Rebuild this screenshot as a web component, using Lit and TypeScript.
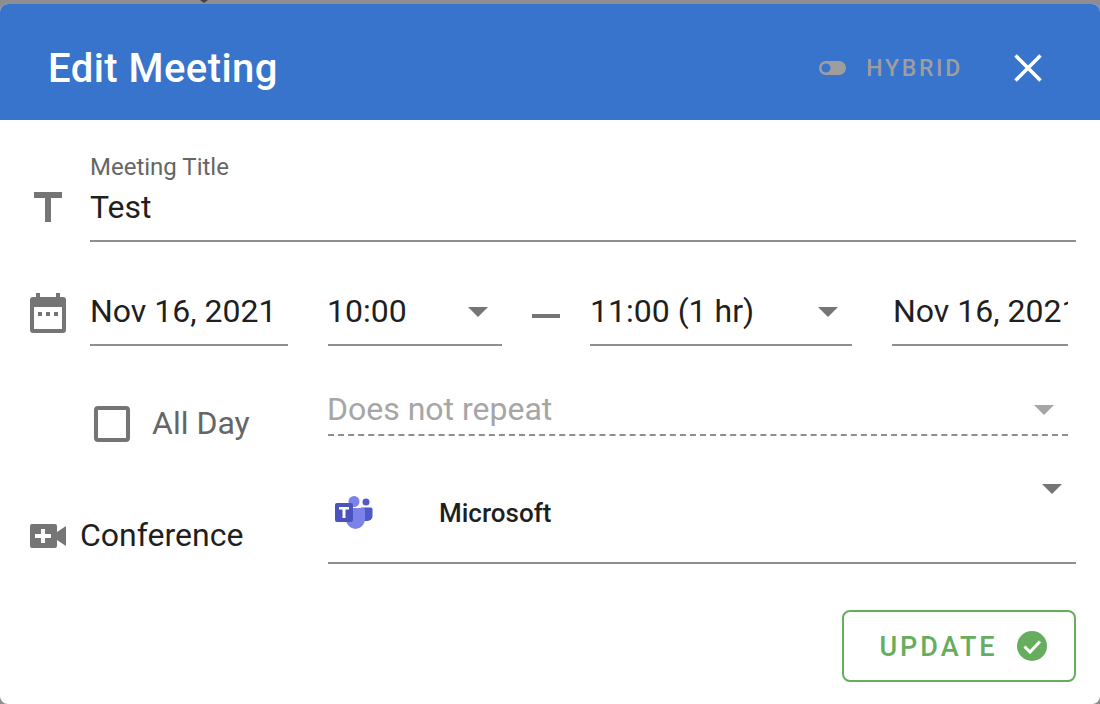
import { LitElement, html, css, svg } from "lit";
import { customElement } from "lit/decorators.js";

const caret = svg`<svg class="caret" width="20" height="10" viewBox="0 0 20 10"><path d="M0 0h20L10 10z" fill="currentColor"/></svg>`;

@customElement("app-root")
export class AppRoot extends LitElement {
  static styles = css`
    :host { display: block; position: relative; width: 1100px; height: 704px; background: #8e8e8e; overflow: hidden; font-family: Roboto, sans-serif; color: #1f1f1f; padding-top: 4px; box-sizing: border-box; }
    .notch { position: absolute; left: 200px; top: 0; width: 8px; height: 3px; display: block; }
    .dialog { height: 700px; background: #fff; border-radius: 8px; overflow: hidden; }
    .head { height: 116px; background: #3874cb; display: flex; align-items: center; padding: 12px 57px 0 48px; box-sizing: border-box; color: #fff; }
    .head h1 { margin: 2px auto 0 0; font-size: 40px; font-weight: 500; letter-spacing: 0.45px; line-height: 1; }
    .hybrid { display: flex; align-items: center; gap: 20px; color: #9e9e9e; font-size: 23px; font-weight: 500; letter-spacing: 2.7px; margin-right: 50px; }
    .close { display: block; }
    .body { padding: 0 24px 0 30px; }
    .title-row { display: flex; margin-top: 32px; height: 90px; }
    .icon { width: 36px; flex: none; display: block; }
    .t-ic { margin-top: 40px; }
    .field { margin-left: 24px; flex: 1; border-bottom: 2px solid #8e8e8e; height: 90px; box-sizing: border-box; }
    .label { font-size: 24px; line-height: 30px; color: #666; }
    .value { font-size: 32px; line-height: 40px; margin-top: 5px; }
    .date-row { display: flex; align-items: flex-start; margin-top: 50px; height: 54px; }
    .cal { margin-top: 1px; }
    .inp { height: 54px; box-sizing: border-box; border-bottom: 2px solid #8e8e8e; font-size: 32px; line-height: 38px; white-space: nowrap; overflow: hidden; display: flex; justify-content: space-between; color: #1f1f1f; }
    .inp span, .repeat span { margin-left: -1px; }
    .caret { color: #757575; flex: none; margin-top: 15px; margin-right: 14px; }
    .d1 { width: 198px; margin-left: 24px; }
    .t1 { width: 174px; margin-left: 40px; }
    .dash { width: 28px; height: 4px; margin: 22px 30px 0; background: #757575; flex: none; }
    .t2 { width: 262px; }
    .t2 span { margin-left: 0; }
    .d2 { width: 176px; margin-left: 40px; padding-left: 1px; }
    .repeat-row { display: flex; margin-top: 38px; height: 52px; }
    .check { width: 36px; height: 36px; margin: 22px 0 0 64px; box-sizing: border-box; border: 4px solid #757575; border-radius: 4px; flex: none; }
    .allday { width: 176px; margin-left: 22px; font-size: 32px; line-height: 38px; padding-top: 20px; color: #666; flex: none; }
    .repeat { flex: none; width: 740px; height: 52px; box-sizing: border-box; border-bottom: 2px dashed #8e8e8e; display: flex; justify-content: space-between; font-size: 32px; line-height: 38px; color: #a6a6a6; padding-top: 6px; }
    .repeat .caret { color: #a6a6a6; margin-right: 14px; margin-top: 15px; }
    .conf-row { display: flex; height: 128px; }
    .conf-label { width: 298px; display: flex; align-items: center; gap: 14px; font-size: 32px; margin-top: 79px; height: 40px; flex: none; }
    .video { flex: none; margin-top: 2px; }
    .conf { flex: 1; height: 128px; border-bottom: 2px solid #8e8e8e; box-sizing: border-box; display: flex; align-items: flex-start; }
    .teams { margin: 58px 0 0 6px; flex: none; }
    .ms { font-size: 26px; font-weight: 500; margin: 61px 0 0 66px; line-height: 32px; flex: 1; }
    .conf .caret { margin: 48px 14px 0 0; }
    .foot { display: flex; justify-content: flex-end; margin-top: 46px; }
    .update { width: 234px; height: 72px; box-sizing: border-box; border: 2px solid #66ad5e; border-radius: 8px; background: #fff; color: #66ad5e; font: 500 27px Roboto, sans-serif; letter-spacing: 3px; display: flex; align-items: center; justify-content: center; gap: 19px; padding: 2px 0 0 8px; }
    .update svg { margin-top: -2px; }
  `;

  render() {
    return html`
      <svg class="notch" viewBox="0 0 8 3"><path d="M0 0h8L4 3z" fill="#444"/></svg>
      <div class="dialog">
        <header class="head">
          <h1>Edit Meeting</h1>
          <div class="hybrid">
            <svg width="27" height="14" viewBox="0 0 27 14"><rect width="27" height="14" rx="7" fill="#9e9e9e"/><circle cx="7" cy="7" r="4.5" fill="#3874cb"/></svg>
            <span>HYBRID</span>
          </div>
          <svg class="close" width="30" height="30" viewBox="0 0 30 30"><path d="M2.5 2.5l25 25M27.5 2.500l-25 25" stroke="#fff" stroke-width="3.6" fill="none"/></svg>
        </header>
        <div class="body">
          <div class="title-row">
            <svg class="icon t-ic" width="36" height="30" viewBox="0 0 36 30"><path d="M4 0h28v6H21v24h-6V6H4z" fill="#757575"/></svg>
            <div class="field">
              <div class="label">Meeting Title</div>
              <div class="value">Test</div>
            </div>
          </div>
          <div class="date-row">
            <svg class="icon cal" width="36" height="40" viewBox="0 0 36 40"><path fill="#757575" fill-rule="evenodd" d="M6 0h4v4h16V0h4v4h3a3 3 0 0 1 3 3v30a3 3 0 0 1-3 3H3a3 3 0 0 1-3-3V7a3 3 0 0 1 3-3h3zM4 14v22h28V14zM8 19h4v4H8zM16 19h4v4h-4zM24 19h4v4h-4z"/></svg>
            <div class="inp d1">Nov 16, 2021</div>
            <div class="inp t1"><span>10:00</span>${caret}</div>
            <div class="dash"></div>
            <div class="inp t2"><span>11:00 (1 hr)</span>${caret}</div>
            <div class="inp d2">Nov 16, 2021</div>
          </div>
          <div class="repeat-row">
            <div class="check"></div>
            <div class="allday">All Day</div>
            <div class="repeat"><span>Does not repeat</span>${caret}</div>
          </div>
          <div class="conf-row">
            <div class="conf-label">
              <svg class="video" width="36" height="24" viewBox="0 0 36 24"><path fill="#757575" fill-rule="evenodd" d="M2 0h23a2 2 0 0 1 2 2v6L36 2v20l-9-6v6a2 2 0 0 1-2 2H2a2 2 0 0 1-2-2V2a2 2 0 0 1 2-2zM11 5v5H5v4h6v5h4v-5h6v-4h-6V5z"/></svg>
              <span>Conference</span>
            </div>
            <div class="conf">
              <svg class="teams" width="39" height="36" viewBox="0 0 39 36">
                <circle cx="32" cy="8" r="3.500" fill="#5059c9"/>
                <path d="M27 13.500h10a1.500 1.500 0 0 1 1.500 1.500v7a5 5 0 0 1-5 5H29z" fill="#5059c9"/>
                <circle cx="20" cy="7.500" r="5.500" fill="#7b83eb"/>
                <path d="M12 14h17a2 2 0 0 1 2 2v9a9.500 10 0 0 1-19 0z" fill="#7b83eb"/>
                <rect x="1" y="9" width="18" height="19" rx="2" fill="#4b53bc"/>
                <path d="M5 13h10v2.500h-3.500V24h-3v-8.500H5z" fill="#fff"/>
              </svg>
              <div class="ms">Microsoft</div>
              ${caret}
            </div>
          </div>
          <div class="foot">
            <button class="update">
              <span>UPDATE</span>
              <svg width="30" height="30" viewBox="0 0 30 30"><circle cx="15" cy="15" r="15" fill="#66ad5e"/><path d="M7.500 15.500l5.500 5.500 10-10.500" stroke="#fff" stroke-width="3" fill="none"/></svg>
            </button>
          </div>
        </div>
      </div>
    `;
  }
}
